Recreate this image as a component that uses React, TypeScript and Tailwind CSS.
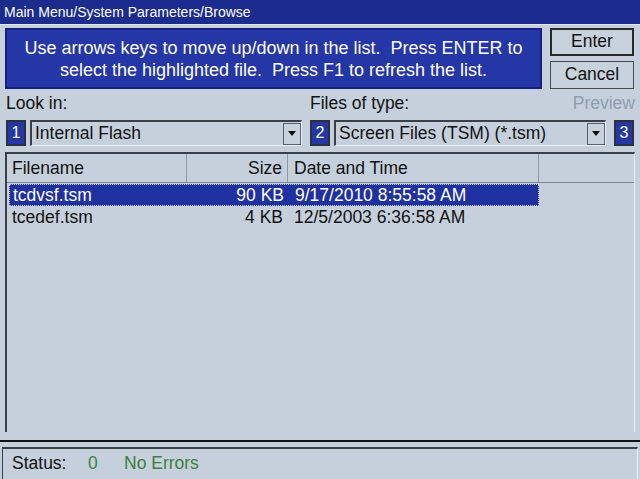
export default function App() {
  const files = [
    { name: "tcdvsf.tsm", size: "90 KB", date: "9/17/2010 8:55:58 AM", selected: true },
    { name: "tcedef.tsm", size: "4 KB", date: "12/5/2003 6:36:58 AM", selected: false },
  ];

  return (
    <div className="w-[640px] h-[479px] overflow-hidden bg-[#c5d0dc] flex flex-col font-['Liberation_Sans',Arial,sans-serif] text-[#111]">
      {/* Title bar */}
      <div className="h-[25px] shrink-0 bg-[#1b2b8e] text-white text-[14px] pl-[4px] flex items-center border-b border-[#dfe6ee]">
        Main Menu/System Parameters/Browse
      </div>

      {/* Instructions + buttons */}
      <div className="flex px-[5px] pt-[3px]">
        <div className="w-[537px] h-[61px] bg-[#2536a6] border-2 border-[#152080] text-white text-[18px] leading-[22px] text-center flex flex-col justify-center">
          <div>Use arrows keys to move up/down in the list.&nbsp; Press ENTER to</div>
          <div>select the highlighted file.&nbsp; Press F1 to refresh the list.</div>
        </div>
        <div className="ml-auto mr-[1px] w-[84px] flex flex-col gap-[5px]">
          <button className="h-[28px] border-2 border-[#2a2a2a] bg-[#c8d2dc] text-[17.5px] leading-none">Enter</button>
          <button className="h-[28px] border border-[#4a4a4a] bg-[#c8d2dc] text-[17.5px] leading-none">Cancel</button>
        </div>
      </div>

      {/* Labels */}
      <div className="flex items-end h-[27px] px-[6px] text-[17.5px]">
        <div className="w-[304px]">Look in:</div>
        <div>Files of type:</div>
        <div className="ml-auto mr-[-1px] text-[#8f9db2]">Preview</div>
      </div>

      {/* Combos */}
      <div className="flex items-center h-[30px] px-[6px] mt-[2px]">
        <NumBox n="1" />
        <Combo width="w-[272px]" text="Internal Flash" />
        <div className="w-[8px]" />
        <NumBox n="2" />
        <Combo width="w-[272px]" text="Screen Files (TSM) (*.tsm)" />
        <div className="ml-auto">
          <NumBox n="3" />
        </div>
      </div>

      {/* File list */}
      <div className="mx-[5px] mt-[4px] h-[280px] border-l-2 border-t-2 border-[#3a3f48] border-r border-r-[#eef2f6] flex flex-col">
        <div className="h-[29px] flex items-center text-[17.5px] border-b border-[#7f8896]">
          <div className="w-[180px] h-full pl-[5px] flex items-center border-r border-[#8f98a6]">Filename</div>
          <div className="w-[101px] h-full pr-[5px] flex items-center justify-end border-r border-[#8f98a6]">Size</div>
          <div className="w-[251px] h-full pl-[6px] flex items-center border-r border-[#8f98a6]">Date and Time</div>
        </div>
        <div className="pl-[2px] pt-[1px]">
          {files.map((f) => (
            <div
              key={f.name}
              className={
                f.selected
                  ? "w-[530px] h-[22px] flex items-center text-[17.5px] bg-[#1f30a0] text-white border border-dotted border-[#c9d0e6]"
                  : "w-[530px] h-[23px] flex items-center text-[17.5px]"
              }
            >
              <div className="w-[178px] pl-[3px]">{f.name}</div>
              <div className="w-[101px] pr-[5px] text-right">{f.size}</div>
              <div className="pl-[6px]">{f.date}</div>
            </div>
          ))}
        </div>
      </div>

      {/* Status bar */}
      <div className="mt-auto h-[39px] border-t-2 border-[#111] pt-[5px]">
        <div className="h-full mx-[2px] border-t-2 border-l border-[#3a4048] border-r border-r-[#eef2f6] flex items-center text-[17.5px] pl-[9px] pb-[2px]">
          <span className="w-[76px]">Status:</span>
          <span className="w-[36px] text-[#3e7e40]">0</span>
          <span className="text-[#3e7e40]">No Errors</span>
        </div>
      </div>
    </div>
  );
}

function NumBox({ n }: { n: string }) {
  return (
    <div className="w-[20px] h-[26px] border-2 border-[#2a2f3a] bg-[#2536a6] text-white text-[16px] flex items-center justify-center">
      {n}
    </div>
  );
}

function Combo({ width, text }: { width: string; text: string }) {
  return (
    <div className={`${width} h-[26px] ml-[4px] border-l-2 border-t-2 border-[#3a3f48] border-r border-b border-r-[#eef2f6] border-b-[#eef2f6] flex items-center`}>
      <div className="flex-1 pl-[3px] text-[17.5px] leading-none">{text}</div>
      <div className="w-[18px] h-[22px] border border-[#5a6070] bg-[#c8d2dc] flex items-center justify-center">
        <svg width="8" height="5" viewBox="0 0 8 5">
          <path d="M0 0 H8 L4 5 Z" fill="#111" />
        </svg>
      </div>
    </div>
  );
}
